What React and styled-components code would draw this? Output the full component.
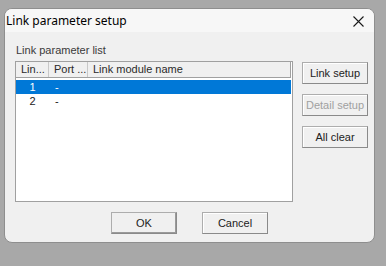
import React from "react";
import styled, { createGlobalStyle } from "styled-components";

const rows = [
  { no: "1", port: "-", name: "", selected: true },
  { no: "2", port: "-", name: "", selected: false },
];

const App = () => {
  return (
    <>
      <GlobalStyle />
      <Dialog>
        <TitleBar>
          <Title>Link parameter setup</Title>
          <CloseButton>
            <svg width="11" height="11" viewBox="0 0 11 11">
              <path d="M0.5 0.5 L10.5 10.5 M10.5 0.5 L0.5 10.5" stroke="#1a1a1a" strokeWidth="1.1" fill="none" />
            </svg>
          </CloseButton>
        </TitleBar>
        <Body>
          <GroupLabel>Link parameter list</GroupLabel>
          <Main>
            <List>
              <Header>
                <HeadCell $w={33}>Lin...</HeadCell>
                <HeadCell $w={39}>Port ...</HeadCell>
                <HeadCell $last>Link module name</HeadCell>
              </Header>
              {rows.map((r) => (
                <Row key={r.no} $selected={r.selected}>
                  <Cell $w={33} $center>{r.no}</Cell>
                  <Cell $w={39}>{r.port}</Cell>
                  <Cell>{r.name}</Cell>
                </Row>
              ))}
            </List>
            <SideButtons>
              <Button>Link setup</Button>
              <Button disabled>Detail setup</Button>
              <Button>All clear</Button>
            </SideButtons>
          </Main>
          <Footer>
            <Button $default>OK</Button>
            <Button>Cancel</Button>
          </Footer>
        </Body>
      </Dialog>
    </>
  );
};

export default App;

const GlobalStyle = createGlobalStyle`
  html, body {
    margin: 0;
    padding: 0;
    background: #a8a8a8;
    height: 100%;
  }
  body {
    font-family: "Liberation Sans", Arial, sans-serif;
  }
`;

const Dialog = styled.div`
  margin: 8px 0 0 4px;
  width: 371px;
  height: 235px;
  box-sizing: border-box;
  border: 1px solid #8e8e8e;
  border-radius: 8px;
  background: #f0f0f0;
  overflow: hidden;
  display: flex;
  flex-direction: column;
`;

const TitleBar = styled.div`
  height: 23px;
  background: #f7f7f7;
  display: flex;
  align-items: center;
  justify-content: space-between;
  padding: 0 10px 0 1px;
`;

const Title = styled.span`
  font-family: "Noto Sans", "Open Sans", sans-serif;
  font-size: 12px;
  color: #000;
`;

const CloseButton = styled.div`
  display: flex;
  align-items: center;
  padding-top: 2px;
`;

const Body = styled.div`
  flex: 1;
  padding: 12px 6px 0 10px;
  display: flex;
  flex-direction: column;
`;

const GroupLabel = styled.div`
  font-size: 11px;
  line-height: 13px;
  color: #3a3a3a;
  padding-left: 1px;
  margin-bottom: 4px;
`;

const Main = styled.div`
  display: flex;
  gap: 9px;
`;

const List = styled.div`
  width: 279px;
  height: 141px;
  box-sizing: border-box;
  border: 1px solid #a0a0a0;
  background: #fff;
  padding-right: 1px;
`;

const Header = styled.div`
  display: flex;
  height: 16px;
  box-sizing: border-box;
  background: #f0f0f0;
  border-bottom: 1px solid #a0a0a0;
  border-right: 1px solid #a0a0a0;
  margin-bottom: 2px;
`;

const HeadCell = styled.div`
  ${(p) => (p.$w ? `width: ${p.$w}px;` : "flex: 1;")}
  box-sizing: border-box;
  padding-left: 5px;
  font-size: 11px;
  line-height: 15px;
  color: #2a2a2a;
  white-space: nowrap;
  overflow: hidden;
  border-right: ${(p) => (p.$last ? "none" : "1px solid #c8c8c8")};
`;

const Row = styled.div`
  display: flex;
  height: 14px;
  background: ${(p) => (p.$selected ? "#0078d7" : "transparent")};
  color: ${(p) => (p.$selected ? "#fff" : "#1a1a1a")};
`;

const Cell = styled.div`
  ${(p) => (p.$w ? `width: ${p.$w}px;` : "flex: 1;")}
  box-sizing: border-box;
  font-size: 11px;
  line-height: 14px;
  text-align: ${(p) => (p.$center ? "center" : "left")};
  padding-left: ${(p) => (p.$center ? "0" : "6px")};
`;

const SideButtons = styled.div`
  display: flex;
  flex-direction: column;
  gap: 10px;
  padding-top: 1px;
`;

const Button = styled.button`
  width: 66px;
  height: 22px;
  box-sizing: border-box;
  padding: 0;
  font-family: "Liberation Sans", Arial, sans-serif;
  font-size: 11px;
  font-weight: 400;
  color: #222;
  background: #f0f0f0;
  border: 1px solid #adadad;
  border-right-color: #8a8a8a;
  border-bottom-color: #8a8a8a;
  box-shadow: ${(p) => (p.$default ? "inset -1px -1px 0 #9a9a9a" : "inset 1px 1px 0 #fff")};

  &:disabled {
    color: #a0a0a0;
  }
`;

const Footer = styled.div`
  display: flex;
  justify-content: center;
  gap: 25px;
  margin-top: 10px;
  margin-right: 4px;
`;
